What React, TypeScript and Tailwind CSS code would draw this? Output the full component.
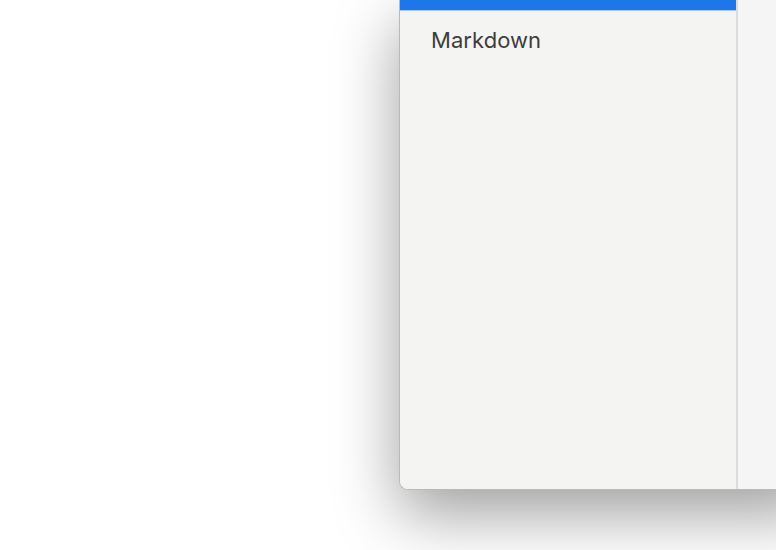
export default function App() {
  return (
    <div className="h-[550px] w-[776px] overflow-hidden bg-white pl-[399px]">
      <div className="flex h-[490px] w-[420px] overflow-hidden rounded-bl-[9px] border-b border-l border-[#b9b9b9] bg-[#f5f5f5] shadow-[0_24px_64px_rgba(0,0,0,0.38)]">
        <aside className="flex w-[336px] flex-col bg-[#f4f4f3]">
          <div className="h-[10px] bg-[#1e76eb]" />
          <div className="h-px bg-[#a9c7ef]" />
          <div className="pl-[31px] pt-[15px] font-['Inter',sans-serif] text-[22px] leading-[28px] tracking-[0.05px] text-[#3d3d3d]">
            Markdown
          </div>
        </aside>
        <div className="w-[2px] bg-[#dcdcdc]" />
        <main className="flex-1 bg-[#f5f5f5]" />
      </div>
    </div>
  );
}
